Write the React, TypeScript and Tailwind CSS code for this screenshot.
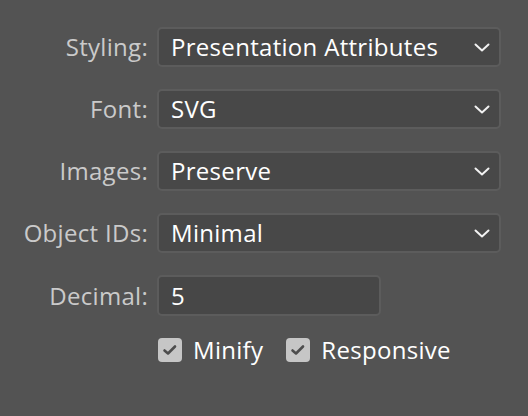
import React from 'react'

const font = { fontFamily: '"Open Sans", "Liberation Sans", sans-serif' }

function Chevron() {
  return (
    <svg width="16" height="9" viewBox="0 0 16 9" fill="none">
      <polyline points="1.5,1.5 8,7.5 14.5,1.5" stroke="#f2f2f2" strokeWidth="2" strokeLinecap="round" strokeLinejoin="round" />
    </svg>
  )
}

function Check() {
  return (
    <span className="flex h-[24px] w-[24px] shrink-0 items-center justify-center rounded-[4px] bg-[#c6c6c6]">
      <svg width="16" height="14" viewBox="0 0 16 14" fill="none">
        <polyline points="2.5,7.5 6,10.5 13,3.5" stroke="#4d4d4d" strokeWidth="2.6" strokeLinecap="round" strokeLinejoin="round" />
      </svg>
    </span>
  )
}

function Select({ value }: { value: string }) {
  return (
    <div className="flex h-[40px] w-[344px] items-center justify-between rounded-[5px] border-2 border-[#5c5c5c] bg-[#484848] pl-[12px] pr-[9px] text-[24px] leading-none tracking-[0.3px] text-white">
      <span>{value}</span>
      <Chevron />
    </div>
  )
}

const rows = [
  { label: 'Styling:', value: 'Presentation Attributes' },
  { label: 'Font:', value: 'SVG' },
  { label: 'Images:', value: 'Preserve' },
  { label: 'Object IDs:', value: 'Minimal' },
]

const labelCls = 'text-right text-[24px] leading-none tracking-[0.3px] text-[#cacaca]'

export default function App() {
  return (
    <div className="h-[416px] w-[528px] bg-[#535353] pt-[27px]" style={font}>
      <div className="grid grid-cols-[148px_1fr] items-center gap-x-[9px] gap-y-[22px]">
        {rows.map((r) => (
          <React.Fragment key={r.label}>
            <div className={labelCls}>{r.label}</div>
            <Select value={r.value} />
          </React.Fragment>
        ))}
        <div className={labelCls}>Decimal:</div>
        <div className="flex h-[41px] w-[224px] items-center rounded-[5px] border-2 border-[#5c5c5c] bg-[#474747] pl-[12px] text-[24px] leading-none text-white">
          5
        </div>
        <div />
        <div className="flex h-[24px] items-center text-[24px] leading-none tracking-[0.3px] text-white">
          <label className="ml-[1px] flex items-center gap-[11px]">
            <Check />
            <span>Minify</span>
          </label>
          <label className="ml-[23px] flex items-center gap-[11px]">
            <Check />
            <span>Responsive</span>
          </label>
        </div>
      </div>
    </div>
  )
}
